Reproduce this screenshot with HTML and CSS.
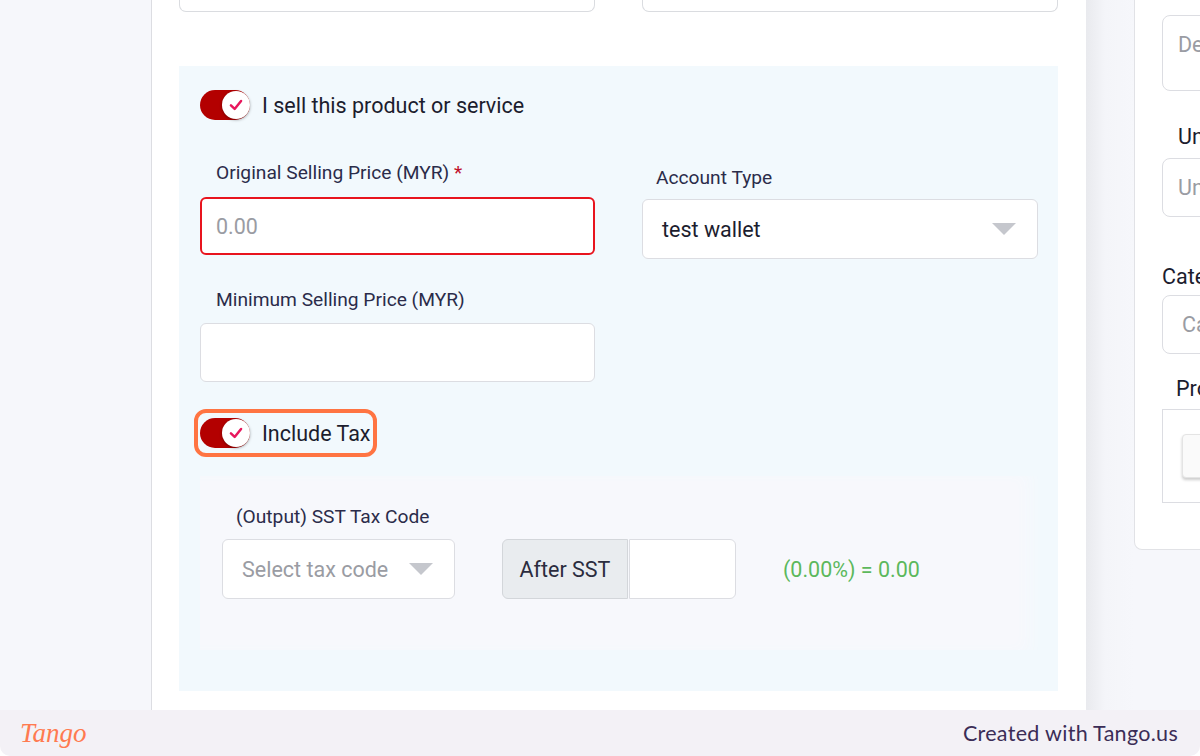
FILE: index.html
```html
<!DOCTYPE html>
<html>
<head>
<meta charset="utf-8">
<link rel="stylesheet" href="styles.css">
</head>
<body>
<div class="viewport">
  <div class="gutter-left"></div>
  <main class="card">
    <div class="top-row">
      <div class="cut-input"></div>
      <div class="cut-input"></div>
    </div>
    <section class="sell">
      <div class="toggle-row">
        <span class="toggle"><span class="knob"><svg viewBox="0 0 16 16" width="18" height="18"><path d="M3.5 8.3 L6.8 11.5 L12.5 4.5" fill="none" stroke="#e8175d" stroke-width="2.2" stroke-linecap="round" stroke-linejoin="round"/></svg></span></span>
        <span class="toggle-text">I sell this product or service</span>
      </div>
      <div class="grid">
        <div class="field">
          <label class="lbl">Original Selling Price (MYR) <span class="req">*</span></label>
          <div class="input error"><span class="ph">0.00</span></div>
        </div>
        <div class="field field-r">
          <label class="lbl">Account Type</label>
          <div class="input select"><span class="val">test wallet</span><span class="caret"></span></div>
        </div>
        <div class="field field-min">
          <label class="lbl">Minimum Selling Price (MYR)</label>
          <div class="input tall"></div>
        </div>
      </div>
      <div class="tax-wrap">
        <div class="toggle-row highlight">
          <span class="toggle"><span class="knob"><svg viewBox="0 0 16 16" width="18" height="18"><path d="M3.5 8.3 L6.8 11.5 L12.5 4.5" fill="none" stroke="#e8175d" stroke-width="2.2" stroke-linecap="round" stroke-linejoin="round"/></svg></span></span>
          <span class="toggle-text">Include Tax</span>
        </div>
      </div>
      <div class="tax-box">
        <label class="lbl tax-lbl">(Output) SST Tax Code</label>
        <div class="tax-row">
          <div class="input select small"><span class="ph">Select tax code</span><span class="caret"></span></div>
          <div class="group">
            <span class="addon">After SST</span>
            <span class="addon-input"></span>
          </div>
          <span class="result">(0.00%) = 0.00</span>
        </div>
      </div>
    </section>
  </main>
  <div class="gutter-mid"></div>
  <aside class="side">
    <div class="s-textarea"><span class="ph">Description</span></div>
    <div class="s-lbl s-indent">Unit</div>
    <div class="s-input"><span class="ph">Unit</span></div>
    <div class="s-lbl s-cat">Category</div>
    <div class="s-input s-input2"><span class="ph">Category</span></div>
    <div class="s-lbl s-pro">Product Image</div>
    <div class="s-box"><span class="s-btn"></span></div>
  </aside>
</div>
<footer class="footer">
  <span class="logo">Tango</span>
  <span class="credit">Created with Tango.us</span>
</footer>
</body>
</html>
```

FILE: styles.css
```css
* { box-sizing: border-box; }
html, body { margin: 0; padding: 0; }
body {
  width: 1200px;
  height: 756px;
  overflow: hidden;
  background: #ffffff;
  font-family: Roboto, "Liberation Sans", sans-serif;
  color: #1f2133;
}
.viewport {
  display: flex;
  height: 710px;
  background: #f6f7fb;
  overflow: hidden;
}
.gutter-left { width: 151px; flex: none; }
.card {
  width: 935px;
  flex: none;
  background: #ffffff;
  border-left: 1px solid #dcdde2;
  padding: 0 28px 0 27px;
}
.gutter-mid {
  width: 48px;
  flex: none;
  background: linear-gradient(to right, #e9eaee, #f4f5f9 40%, #f6f7fb);
}
.top-row { display: flex; gap: 47px; }
.cut-input {
  width: 416px;
  height: 12px;
  border: 1px solid #dadce0;
  border-top: none;
  border-radius: 0 0 7px 7px;
}
.sell {
  margin-top: 54px;
  background: #f2f9fd;
  height: 625px;
  padding: 24px 20px 0 21px;
}
.toggle-row {
  display: flex;
  align-items: center;
  height: 30px;
}
.toggle {
  width: 50px;
  height: 30px;
  border-radius: 15px;
  background: #b30000;
  position: relative;
  flex: none;
}
.knob {
  position: absolute;
  right: 0;
  top: 1px;
  width: 28px;
  height: 28px;
  border-radius: 50%;
  background: #ffffff;
  box-shadow: 0 1px 3px rgba(0,0,0,0.35);
  display: flex;
  align-items: center;
  justify-content: center;
}
.toggle-text {
  margin-left: 12px;
  font-size: 21.5px;
  color: #1c1d2e;
}
.grid {
  display: grid;
  grid-template-columns: 395px 396px;
  column-gap: 47px;
  margin-top: 41px;
}
.field { display: flex; flex-direction: column; }
.field-r { padding-top: 5px; }
.field-min { margin-top: 29px; }
.field-min .lbl { margin-bottom: 11px; }
.lbl {
  font-size: 19.2px;
  line-height: 24px;
  color: #2b2c4a;
  padding-left: 16px;
  margin-bottom: 12px;
}
.field-r .lbl { padding-left: 14px; margin-bottom: 9px; }
.req { color: #c0102a; }
.input {
  height: 58px;
  background: #ffffff;
  border: 1px solid #dcdde2;
  border-radius: 6px;
  display: flex;
  align-items: center;
  padding: 0 16px;
  font-size: 21.5px;
}
.input.tall { height: 59px; }
.input.error { border: 2px solid #e8141e; padding-left: 14px; }
.ph { color: #9a9ca3; font-size: 21.5px; }
.val { color: #1c1d2e; }
.select { height: 60px; justify-content: space-between; padding: 0 21px 0 19px; }
.caret {
  width: 0; height: 0;
  border-left: 12px solid transparent;
  border-right: 12px solid transparent;
  border-top: 12px solid #c5c7cd;
}
.tax-wrap { margin-top: 33px; }
.highlight {
  display: inline-flex;
  height: 36px;
  padding-right: 0;
  outline: 4px solid #ff7442;
  outline-offset: 2px;
  border-radius: 6px;
}
.tax-box {
  margin-top: 24px;
  width: 838px;
  height: 174px;
  background: #f7f8fc;
  padding: 29px 0 0 22px;
  box-shadow: -14px 0 16px -6px #f2f9fd inset;
}
.tax-lbl { display: block; padding-left: 14px; margin-bottom: 10px; }
.tax-row { display: flex; align-items: center; }
.small { width: 233px; padding: 0 21px 0 19px; }
.group { display: flex; margin-left: 47px; height: 60px; }
.addon {
  width: 126px;
  background: #e9ecef;
  border: 1px solid #d3d6da;
  border-radius: 6px 0 0 6px;
  display: flex;
  align-items: center;
  justify-content: center;
  font-size: 21.5px;
  color: #2b2c3e;
}
.addon-input {
  width: 107px;
  background: #ffffff;
  border: 1px solid #dcdde2;
  border-radius: 0 6px 6px 0;
  margin-left: 1px;
}
.result {
  margin-left: 47px;
  font-size: 21.5px;
  color: #5cb85c;
}
.side {
  width: 300px;
  flex: none;
  height: 550px;
  background: #ffffff;
  border: 1px solid #e1e2e6;
  border-top: none;
  border-radius: 0 0 0 8px;
  padding: 15px 0 0 27px;
  font-size: 21.5px;
}
.s-textarea {
  height: 76px;
  border: 1px solid #dcdde2;
  border-radius: 8px;
  padding: 16px 0 0 15px;
}
.s-lbl { color: #1c1d2e; font-size: 21.5px; line-height: 24px; }
.s-indent { margin-top: 34px; padding-left: 16px; }
.s-input {
  margin-top: 9px;
  height: 59px;
  border: 1px solid #dcdde2;
  border-radius: 8px;
  display: flex;
  align-items: center;
  padding-left: 15px;
}
.s-cat { margin-top: 48px; }
.s-input2 { margin-top: 6px; padding-left: 19px; }
.s-pro { margin-top: 23px; padding-left: 14px; }
.s-box {
  margin-top: 8px;
  height: 94px;
  border: 1px solid #dcdde2;
  padding: 24px 0 0 19px;
}
.s-btn {
  display: block;
  width: 120px;
  height: 44px;
  background: #fafafa;
  border: 1px solid #e4e4e4;
  border-radius: 4px;
  box-shadow: 0 2px 3px rgba(0,0,0,0.2);
}
.footer {
  height: 46px;
  background: #f3f1f6;
  border-radius: 0 0 10px 10px;
  display: flex;
  align-items: center;
  justify-content: space-between;
  padding: 0 22px 0 20px;
}
.logo {
  font-family: "Liberation Serif", serif;
  font-style: italic;
  font-size: 27px;
  color: #ff7a50;
}
.credit {
  font-family: Lato, "Noto Sans", sans-serif;
  font-size: 21.5px;
  color: #3b2d57;
  letter-spacing: 0.3px;
}
```
